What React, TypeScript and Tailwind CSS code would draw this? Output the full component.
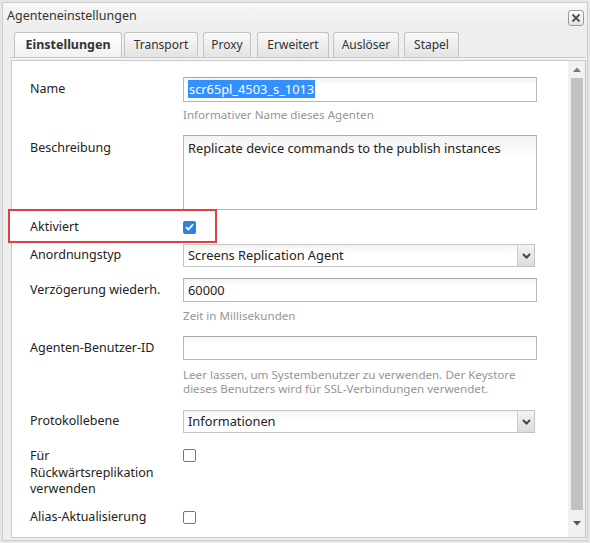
import React from "react";

type RowProps = {
  label: React.ReactNode;
  children?: React.ReactNode;
  className?: string;
  labelClassName?: string;
  overlay?: React.ReactNode;
};

// tab label + its box width / spacing, as measured
const tabs = [
  { name: "Einstellungen", cls: "w-[108px] ml-[0px]" },
  { name: "Transport", cls: "w-[74px] ml-[2px]" },
  { name: "Proxy", cls: "w-[48px] ml-[5px]" },
  { name: "Erweitert", cls: "w-[72px] ml-[6px]" },
  { name: "Auslöser", cls: "w-[66px] ml-[4px]" },
  { name: "Stapel", cls: "w-[55px] ml-[5px]" },
];

// one form line: label column + control column
const Row = ({ label, children, className = "", labelClassName = "", overlay }: RowProps) => (
  <div className={`relative flex ${className}`}>
    {overlay}
    <div className={`relative w-[153px] shrink-0 text-[#222] ${labelClassName}`}>{label}</div>
    <div className="relative">{children}</div>
  </div>
);

const Hint = ({ children, className = "" }: { children: React.ReactNode; className?: string }) => (
  <div className={`pl-[153px] text-[11.6px] text-[#959595] ${className}`}>{children}</div>
);

const Field = ({ children, className = "" }: { children?: React.ReactNode; className?: string }) => (
  <div
    className={`w-[354px] border border-[#b8b8b8] border-t-[#a9a9a9] bg-gradient-to-b from-[#f3f3f3] to-white to-[30%] px-[4px] text-[12.8px] text-[#222] ${className}`}
  >
    {children}
  </div>
);

const SelectBox = ({ value }: { value: string }) => (
  <div className="flex h-[23px] w-[352px] border border-[#c4c4c4] bg-gradient-to-b from-[#f3f3f3] to-white to-[40%]">
    <div className="flex-1 px-[4px] text-[12.8px] leading-[21px] text-[#222]">{value}</div>
    <div className="flex w-[17px] items-center justify-center border-l border-[#cfcfcf] bg-gradient-to-b from-[#f4f4f4] to-[#dcdcdc]">
      <svg width="9" height="6" viewBox="0 0 9 6">
        <polyline points="1,1 4.5,4.5 8,1" fill="none" stroke="#444" strokeWidth="2" />
      </svg>
    </div>
  </div>
);

const Checkbox = ({ checked = false }: { checked?: boolean }) =>
  checked ? (
    <div className="flex h-[13px] w-[13px] items-center justify-center rounded-[2px] bg-[#2f7fe8]">
      <svg width="9" height="8" viewBox="0 0 9 8">
        <polyline points="1,4.2 3.4,6.5 8,1.3" fill="none" stroke="white" strokeWidth="1.8" />
      </svg>
    </div>
  ) : (
    <div className="h-[13px] w-[13px] rounded-[2px] border border-[#767676] bg-white" />
  );

export default function App() {
  return (
    <div className="h-[543px] w-[590px] bg-[#e6e6e6] p-[2px] font-['Noto_Sans',sans-serif] text-[12.5px]">
      <div className="flex h-full flex-col border border-[#cdcdcd] bg-[#eeeeee]">
        {/* Title bar */}
        <div className="flex h-[27px] items-center justify-between bg-gradient-to-b from-[#f7f7f7] to-[#ececec] pl-[4px] pr-[3px]">
          <span className="text-[#333]">Agenteneinstellungen</span>
          <div className="mt-[2px] flex h-[16px] w-[16px] items-center justify-center rounded-[3px] border border-[#9c9c9c] bg-gradient-to-b from-white to-[#e4e4e4]">
            <svg width="10" height="10" viewBox="0 0 10 10">
              <path d="M1.5 1.5 L8.5 8.5 M8.5 1.5 L1.5 8.5" stroke="#555" strokeWidth="2" />
            </svg>
          </div>
        </div>

        {/* Tab strip */}
        <div className="ml-[7px] mr-[1px] flex h-[30px] flex-col">
          <div className="flex h-[27px] items-end pl-[4px]">
            {tabs.map((t, i) => (
              <div
                key={t.name}
                className={`h-[25px] shrink-0 rounded-t-[3px] border border-b-0 border-[#c2c2c2] text-center leading-[23px] text-[#333] ${t.cls} ${
                  i === 0
                    ? "bg-gradient-to-b from-white to-[#f1f1f1] font-bold"
                    : "bg-gradient-to-b from-[#f9f9f9] to-[#e3e3e3] text-[12px]"
                }`}
              >
                {t.name}
              </div>
            ))}
          </div>
          <div className="h-[3px] border-t border-[#c8c8c8] bg-[#f3f3f3]" />
        </div>

        {/* Body */}
        <div className="ml-[8px] mr-[1px] flex h-[478px] border border-[#c9c9c9] bg-white">
          <div className="flex-1 pl-[18px] pt-[16px]">
            <Row label="Name" className="h-[25px] items-center">
              <Field className="h-[25px] leading-[23px]">
                <span className="bg-[#3390ff] px-[1px] text-white">scr65pl_4503_s_1013</span>
              </Field>
            </Row>
            <Hint className="mt-[5px] leading-[16px]">Informativer Name dieses Agenten</Hint>

            <Row label="Beschreibung" className="mt-[12px]" labelClassName="pt-[4px] leading-[18px]">
              <Field className="h-[75px] pt-[3px] leading-[18px]">Replicate device commands to the publish instances</Field>
            </Row>

            <Row
              label="Aktiviert"
              className="h-[34px] items-center"
              overlay={
                <div className="absolute -left-[22px] -top-[1px] h-[34px] w-[209px] border-2 border-[#e2403f] bg-white" />
              }
            >
              <Checkbox checked />
            </Row>

            <Row label="Anordnungstyp" className="h-[23px] items-center">
              <SelectBox value="Screens Replication Agent" />
            </Row>

            <Row label="Verzögerung wiederh." className="mt-[11px] h-[24px] items-center">
              <Field className="h-[24px] leading-[22px]">60000</Field>
            </Row>
            <Hint className="mt-[6px] leading-[16px]">Zeit in Millisekunden</Hint>

            <Row label="Agenten-Benutzer-ID" className="mt-[12px] h-[24px] items-center">
              <Field className="h-[24px]" />
            </Row>
            <Hint className="mt-[8px] leading-[14px]">
              Leer lassen, um Systembenutzer zu verwenden. Der Keystore
              <br />
              dieses Benutzers wird für SSL-Verbindungen verwendet.
            </Hint>

            <Row label="Protokollebene" className="mt-[14px] h-[23px] items-center">
              <SelectBox value="Informationen" />
            </Row>

            <Row
              label={
                <>
                  Für
                  <br />
                  Rückwärtsreplikation
                  <br />
                  verwenden
                </>
              }
              className="mt-[15px]"
              labelClassName="leading-[16.5px]"
            >
              <div className="pt-[1px]">
                <Checkbox />
              </div>
            </Row>

            <Row label="Alias-Aktualisierung" className="mt-[10px] h-[20px] items-center">
              <Checkbox />
            </Row>
          </div>

          {/* Scrollbar */}
          <div className="flex w-[17px] flex-col items-center bg-[#f1f1f1]">
            <div className="flex h-[17px] w-full items-center justify-center">
              <svg width="8" height="5" viewBox="0 0 8 5">
                <polygon points="0,5 4,0.5 8,5" fill="#7a7a7a" />
              </svg>
            </div>
            <div className="h-[432px] w-[12px] bg-[#c1c1c1]" />
            <div className="flex flex-1 w-full items-center justify-center">
              <svg width="8" height="5" viewBox="0 0 8 5">
                <polygon points="0,0 8,0 4,4.5" fill="#555" />
              </svg>
            </div>
          </div>
        </div>
      </div>
    </div>
  );
}
